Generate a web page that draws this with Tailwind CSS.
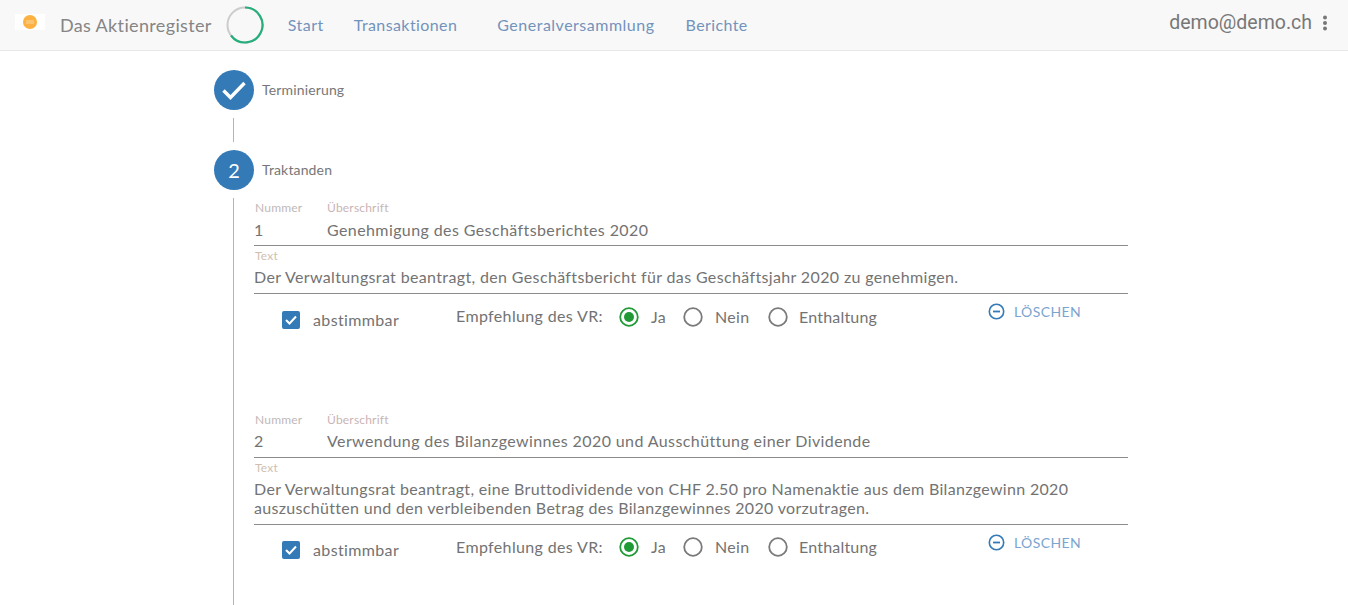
<!DOCTYPE html>
<html lang="de">
<head>
    <meta charset="UTF-8">
    <title>Das Aktienregister</title>
    <script src="https://cdn.jsdelivr.net/npm/@tailwindcss/browser@4"></script>
</head>
<body class="bg-white font-['Lato','Open_Sans',sans-serif] text-[#737373] h-[605px] overflow-hidden">
    <!-- Navbar -->
    <nav class="h-[51px] bg-[#f8f8f8] border-b border-[#e7e7e7] flex items-center">
        <div class="ml-[15px] w-[30px] h-[16px] mb-[6px] bg-white flex items-center justify-center">
            <svg width="16" height="16" viewBox="0 0 16 16"><circle cx="8" cy="8" r="7" fill="#fdb143"/><path d="M4 7h8M4 9h8" stroke="#f8d9a0" stroke-width="1"/></svg>
        </div>
        <span class="ml-[15px] text-[18px] tracking-[0.35px] text-[#858585]">Das Aktienregister</span>
        <svg class="ml-[14px]" width="38" height="38" viewBox="0 0 38 38">
            <circle cx="19" cy="19" r="17.5" fill="none" stroke="#cccccc" stroke-width="2"/>
            <path d="M19 1.5A17.5 17.5 0 1 1 5 29.5" fill="none" stroke="#26ae7c" stroke-width="2.2"/>
        </svg>
        <a class="ml-[24px] text-[16px] tracking-[0.5px] text-[#7393bb]">Start</a>
        <a class="ml-[30px] text-[16px] tracking-[0.4px] text-[#7393bb]">Transaktionen</a>
        <a class="ml-[40px] text-[16px] tracking-[0.5px] text-[#7393bb]">Generalversammlung</a>
        <a class="ml-[31px] text-[16px] tracking-[0.4px] text-[#7393bb]">Berichte</a>
        <div class="ml-auto mr-[20px] flex items-center gap-[10px] mb-[4px]">
            <span class="font-['Roboto',sans-serif] text-[19.5px] text-[#777777]">demo@demo.ch</span>
            <svg width="6" height="16" viewBox="0 0 6 16"><g fill="#777777"><circle cx="3" cy="2.5" r="2"/><circle cx="3" cy="8" r="2"/><circle cx="3" cy="13.5" r="2"/></g></svg>
        </div>
    </nav>

    <!-- Stepper -->
    <main class="ml-[214px] w-[914px] pt-[19px]">
        <div class="flex items-center h-[40px]">
            <div class="w-[40px] h-[40px] rounded-full bg-[#337ab7] flex items-center justify-center">
                <svg width="26" height="20" viewBox="0 0 26 20"><path d="M2.5 10.5l7 7L23.5 3" fill="none" stroke="#fff" stroke-width="3.4"/></svg>
            </div>
            <span class="ml-[8px] mb-[2px] text-[14px] tracking-[0.15px] text-[#777777]">Terminierung</span>
        </div>
        <div class="ml-[19px] w-px h-[24px] mt-[8px] mb-[8px] bg-[#b5b5b5]"></div>
        <div class="flex items-center h-[40px]">
            <div class="w-[40px] h-[40px] rounded-full bg-[#337ab7] flex items-center justify-center text-white text-[20px]">2</div>
            <span class="ml-[8px] mb-[2px] text-[14px] tracking-[0.15px] text-[#777777]">Traktanden</span>
        </div>
        <div class="mt-[8px] ml-[19px] border-l border-[#b5b5b5] pl-[20px] h-[407px] overflow-hidden">
            <!-- Traktandum 1 -->
            <section class="h-[212px]">
                <div class="flex border-b border-[#8c8c8c] h-[48px]">
                    <div class="w-[73px] pl-px">
                        <div class="text-[12px] leading-[20px] tracking-[0.2px] text-[#c0b8b8]">Nummer</div>
                        <div class="text-[16px] leading-[22px] mt-[1px] -ml-px">1</div>
                    </div>
                    <div>
                        <div class="text-[12px] leading-[20px] tracking-[0.2px] text-[#c9b4b4]">Überschrift</div>
                        <div class="text-[16px] leading-[22px] mt-[1px] tracking-[0.4px]">Genehmigung des Geschäftsberichtes 2020</div>
                    </div>
                </div>
                <div class="border-b border-[#8c8c8c] h-[48px]">
                    <div class="text-[12px] leading-[20px] pl-px tracking-[0.2px] text-[#d0bfb0]">Text</div>
                    <div class="text-[16px] leading-[19px] mt-[1px] tracking-[0.36px]">Der Verwaltungsrat beantragt, den Geschäftsbericht für das Geschäftsjahr 2020 zu genehmigen.</div>
                </div>
                <div class="flex items-start pt-[12px]">
                    <label class="flex items-center ml-[28px] w-[174px] mt-[2px]">
                        <span class="w-[18px] h-[18px] rounded-[2px] bg-[#337ab7] flex items-center justify-center">
                            <svg width="12" height="10" viewBox="0 0 12 10"><path d="M1 5l3.5 3.5L11 1.5" fill="none" stroke="#fff" stroke-width="2"/></svg>
                        </span>
                        <span class="ml-[13px] text-[16px] tracking-[0.36px]">abstimmbar</span>
                    </label>
                    <span class="text-[16px] tracking-[0.36px] w-[163px] leading-[20px]">Empfehlung des VR:</span>
                    <span class="flex items-center w-[64px] -mt-px">
                        <svg width="20" height="20" viewBox="0 0 20 20"><circle cx="10" cy="10" r="8.8" fill="none" stroke="#1f9a35" stroke-width="1.8"/><circle cx="10" cy="10" r="5" fill="#1f9a35"/></svg>
                        <span class="ml-[12px] text-[16px] tracking-[0.36px]">Ja</span>
                    </span>
                    <span class="flex items-center w-[85px] -mt-px">
                        <svg width="20" height="20" viewBox="0 0 20 20"><circle cx="10" cy="10" r="8.8" fill="none" stroke="#7a7a7a" stroke-width="1.8"/></svg>
                        <span class="ml-[12px] text-[16px] tracking-[0.3px]">Nein</span>
                    </span>
                    <span class="flex items-center w-[220px] -mt-px">
                        <svg width="20" height="20" viewBox="0 0 20 20"><circle cx="10" cy="10" r="8.8" fill="none" stroke="#7a7a7a" stroke-width="1.8"/></svg>
                        <span class="ml-[11px] text-[16px] tracking-[0.2px]">Enthaltung</span>
                    </span>
                    <span class="flex items-center -mt-[5px] text-[#7ba5cf]">
                        <svg width="17" height="17" viewBox="0 0 17 17"><circle cx="8.5" cy="8.5" r="7.2" fill="none" stroke="#337ab7" stroke-width="1.6"/><path d="M5 8.5h7" stroke="#337ab7" stroke-width="1.8"/></svg>
                        <span class="ml-[9px] text-[14px] tracking-[0.4px]">LÖSCHEN</span>
                    </span>
                </div>
            </section>
            <!-- Traktandum 2 -->
            <section>
                <div class="flex border-b border-[#8c8c8c] h-[48px]">
                    <div class="w-[73px] pl-px">
                        <div class="text-[12px] leading-[20px] tracking-[0.2px] text-[#c0b8b8]">Nummer</div>
                        <div class="text-[16px] leading-[22px] -ml-px">2</div>
                    </div>
                    <div>
                        <div class="text-[12px] leading-[20px] tracking-[0.2px] text-[#c9b4b4]">Überschrift</div>
                        <div class="text-[16px] leading-[22px] tracking-[0.4px]">Verwendung des Bilanzgewinnes 2020 und Ausschüttung einer Dividende</div>
                    </div>
                </div>
                <div class="border-b border-[#8c8c8c] h-[67px]">
                    <div class="text-[12px] leading-[20px] pl-px tracking-[0.2px] text-[#d0bfb0]">Text</div>
                    <div class="text-[16px] leading-[19px] mt-[1px] tracking-[0.32px]">Der Verwaltungsrat beantragt, eine Bruttodividende von CHF 2.50 pro Namenaktie aus dem Bilanzgewinn 2020<br>auszuschütten und den verbleibenden Betrag des Bilanzgewinnes 2020 vorzutragen.</div>
                </div>
                <div class="flex items-start pt-[11px]">
                    <label class="flex items-center ml-[28px] w-[174px] mt-[2px]">
                        <span class="w-[18px] h-[18px] rounded-[2px] bg-[#337ab7] flex items-center justify-center">
                            <svg width="12" height="10" viewBox="0 0 12 10"><path d="M1 5l3.5 3.5L11 1.5" fill="none" stroke="#fff" stroke-width="2"/></svg>
                        </span>
                        <span class="ml-[13px] text-[16px] tracking-[0.36px]">abstimmbar</span>
                    </label>
                    <span class="text-[16px] tracking-[0.36px] w-[163px] leading-[20px] mt-px">Empfehlung des VR:</span>
                    <span class="flex items-center w-[64px] -mt-px">
                        <svg width="20" height="20" viewBox="0 0 20 20"><circle cx="10" cy="10" r="8.8" fill="none" stroke="#1f9a35" stroke-width="1.8"/><circle cx="10" cy="10" r="5" fill="#1f9a35"/></svg>
                        <span class="ml-[12px] text-[16px] tracking-[0.36px]">Ja</span>
                    </span>
                    <span class="flex items-center w-[85px] -mt-px">
                        <svg width="20" height="20" viewBox="0 0 20 20"><circle cx="10" cy="10" r="8.8" fill="none" stroke="#7a7a7a" stroke-width="1.8"/></svg>
                        <span class="ml-[12px] text-[16px] tracking-[0.3px]">Nein</span>
                    </span>
                    <span class="flex items-center w-[220px] -mt-px">
                        <svg width="20" height="20" viewBox="0 0 20 20"><circle cx="10" cy="10" r="8.8" fill="none" stroke="#7a7a7a" stroke-width="1.8"/></svg>
                        <span class="ml-[11px] text-[16px] tracking-[0.2px]">Enthaltung</span>
                    </span>
                    <span class="flex items-center -mt-[4px] text-[#7ba5cf]">
                        <svg width="17" height="17" viewBox="0 0 17 17"><circle cx="8.5" cy="8.5" r="7.2" fill="none" stroke="#337ab7" stroke-width="1.6"/><path d="M5 8.5h7" stroke="#337ab7" stroke-width="1.8"/></svg>
                        <span class="ml-[9px] text-[14px] tracking-[0.4px]">LÖSCHEN</span>
                    </span>
                </div>
            </section>
        </div>
    </main>
</body>
</html>
